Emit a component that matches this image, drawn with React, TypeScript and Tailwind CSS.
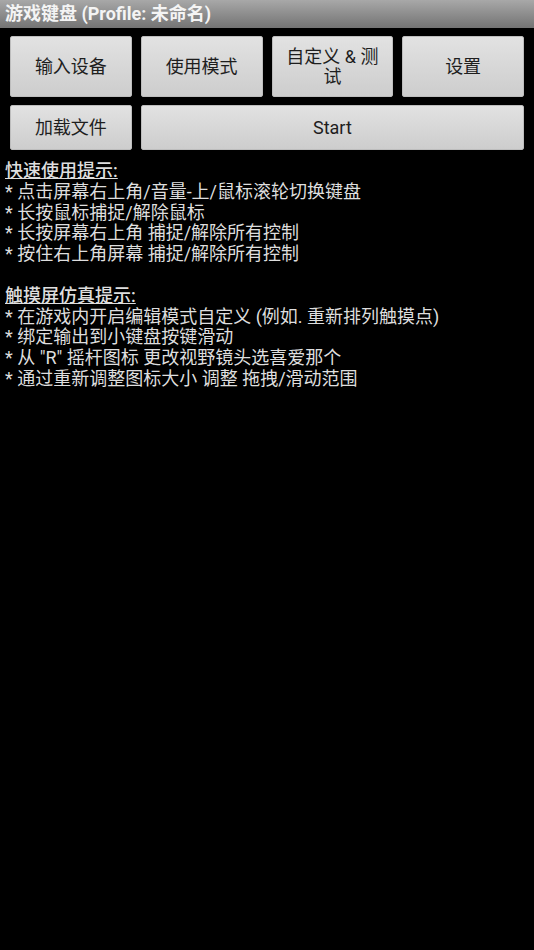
import React from "react";

const font = { fontFamily: '"Roboto", "Noto Sans CJK SC", sans-serif' };

function Btn({ children, className = "" }: { children: React.ReactNode; className?: string }) {
  return (
    <div
      className={
        "flex items-center justify-center text-center text-[18px] leading-[20px] text-[#1e1e1e] bg-gradient-to-b from-[#e2e2e2] to-[#cdcdcd] border border-[#bdbdbd] rounded-[2px] px-2 " +
        className
      }
    >
      {children}
    </div>
  );
}

export default function App() {
  return (
    <div className="w-[534px] h-[950px] bg-black overflow-hidden" style={font}>
      <div className="h-[28px] bg-gradient-to-b from-[#a8a8a8] to-[#747474] flex items-center pl-[5px]">
        <span className="text-[18px] font-bold text-[#f4f4f4] leading-none">游戏键盘 (Profile: 未命名)</span>
      </div>
      <div className="px-[10px] pt-[8px] flex flex-col gap-[8px]">
        <div className="grid grid-cols-4 gap-[9px] h-[61px]">
          <Btn>输入设备</Btn>
          <Btn>使用模式</Btn>
          <Btn>自定义 &amp; 测试</Btn>
          <Btn>设置</Btn>
        </div>
        <div className="grid grid-cols-4 gap-[9px] h-[45px]">
          <Btn>加载文件</Btn>
          <Btn className="col-span-3">Start</Btn>
        </div>
      </div>
      <div className="pl-[5px] pt-[11px] text-[18px] leading-[20.8px] text-[#dedede]">
        <div className="underline font-medium">快速使用提示:</div>
        <div>* 点击屏幕右上角/音量-上/鼠标滚轮切换键盘</div>
        <div>* 长按鼠标捕捉/解除鼠标</div>
        <div>* 长按屏幕右上角 捕捉/解除所有控制</div>
        <div>* 按住右上角屏幕 捕捉/解除所有控制</div>
        <div className="h-[20.8px]"></div>
        <div className="underline font-medium">触摸屏仿真提示:</div>
        <div>* 在游戏内开启编辑模式自定义 (例如. 重新排列触摸点)</div>
        <div>* 绑定输出到小键盘按键滑动</div>
        <div>* 从 "R" 摇杆图标 更改视野镜头选喜爱那个</div>
        <div>* 通过重新调整图标大小 调整 拖拽/滑动范围</div>
      </div>
    </div>
  );
}
